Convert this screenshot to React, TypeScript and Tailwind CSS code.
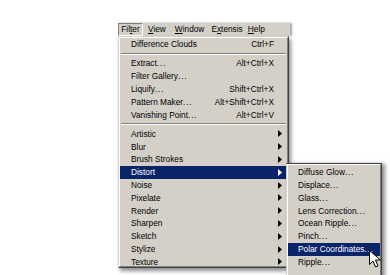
import React from "react";

const font = { fontFamily: '"Liberation Sans", Arial, sans-serif' };

function Arrow({ white }: { white?: boolean }) {
  return (
    <svg width="4" height="7" viewBox="0 0 4 7" className="shrink-0">
      <path d="M0 0 L4 3.5 L0 7 Z" fill={white ? "#ffffff" : "#000000"} />
    </svg>
  );
}

function Label({ text }: { text: string }) {
  if (text.endsWith("...")) {
    return (
      <>
        {text.slice(0, -3)}
        <span className="tracking-[0.8px]">...</span>
      </>
    );
  }
  return <>{text}</>;
}

type Item = { label: string; shortcut?: string; sub?: boolean; active?: boolean };

function Row({ item }: { item: Item }) {
  return (
    <div
      className={`h-[12.8px] flex items-center pl-[11px] pr-[5px] ${
        item.active ? "bg-[#0a246a] text-white" : "text-black"
      }`}
    >
      <span className="flex-1 whitespace-nowrap">
        <Label text={item.label} />
      </span>
      {item.shortcut && <span className="whitespace-nowrap mr-[8px]">{item.shortcut}</span>}
      {item.sub && <Arrow white={item.active} />}
    </div>
  );
}

function Sep() {
  return (
    <div className="h-[6.4px] flex flex-col justify-center px-[1px]">
      <div className="h-[1px] bg-[#808080]" />
      <div className="h-[1px] bg-white" />
    </div>
  );
}

export default function App() {
  const g1: Item[] = [{ label: "Difference Clouds", shortcut: "Ctrl+F" }];
  const g2: Item[] = [
    { label: "Extract...", shortcut: "Alt+Ctrl+X" },
    { label: "Filter Gallery..." },
    { label: "Liquify...", shortcut: "Shift+Ctrl+X" },
    { label: "Pattern Maker...", shortcut: "Alt+Shift+Ctrl+X" },
    { label: "Vanishing Point...", shortcut: "Alt+Ctrl+V" },
  ];
  const g3: Item[] = [
    "Artistic",
    "Blur",
    "Brush Strokes",
    "Distort",
    "Noise",
    "Pixelate",
    "Render",
    "Sharpen",
    "Sketch",
    "Stylize",
    "Texture",
  ].map((l) => ({ label: l, sub: true, active: l === "Distort" }));
  const subItems = [
    "Diffuse Glow...",
    "Displace...",
    "Glass...",
    "Lens Correction...",
    "Ocean Ripple...",
    "Pinch...",
    "Polar Coordinates...",
    "Ripple...",
  ];

  return (
    <div className="relative w-[390px] h-[275px] bg-white overflow-hidden text-[8.3px] leading-none" style={font}>
      {/* Menu bar */}
      <div className="absolute left-[118px] top-[23px] w-[172px] h-[13px] bg-[#d4d0c8] flex items-center shadow-[2px_0_2px_rgba(0,0,0,0.35)]">
        <div className="h-full w-[25px] flex items-center justify-center border border-t-[#808080] border-l-[#808080] border-b-white border-r-white">
          <span>
            Fil<span className="underline">t</span>er
          </span>
        </div>
        <span className="ml-[5px]">
          <span className="underline">V</span>iew
        </span>
        <span className="ml-[9px]">
          <span className="underline">W</span>indow
        </span>
        <span className="ml-[7px]">
          E<span className="underline">x</span>tensis
        </span>
        <span className="ml-[5px]">
          <span className="underline">H</span>elp
        </span>
      </div>

      {/* Main dropdown */}
      <div className="absolute left-[118px] top-[36px] w-[171px] h-[232.4px] bg-[#d4d0c8] border border-t-[#d4d0c8] border-l-[#d4d0c8] border-r-[#404040] border-b-[#404040] shadow-[2px_3px_4px_rgba(0,0,0,0.45)]">
        <div className="h-full border border-t-white border-l-white border-r-[#808080] border-b-[#808080]">
          {g1.map((i) => (
            <Row key={i.label} item={i} />
          ))}
          <Sep />
          {g2.map((i) => (
            <Row key={i.label} item={i} />
          ))}
          <Sep />
          {g3.map((i) => (
            <Row key={i.label} item={i} />
          ))}
        </div>
      </div>

      {/* Submenu */}
      <div className="absolute left-[286px] top-[163px] w-[96px] h-[120px] bg-[#d4d0c8] border border-t-[#404040] border-l-[#d4d0c8] border-r-[#404040] shadow-[3px_1px_4px_rgba(0,0,0,0.45)]">
        <div className="h-full border border-t-white border-l-white border-r-[#808080] border-b-0 pt-[1px]">
          {subItems.map((l) => (
            <div
              key={l}
              className={`h-[12.8px] flex items-center pl-[10px] whitespace-nowrap ${
                l === "Polar Coordinates..." ? "bg-[#0a246a] text-white" : "text-black"
              }`}
            >
              <Label text={l} />
            </div>
          ))}
        </div>
      </div>

      {/* Cursor */}
      <svg className="absolute left-[369px] top-[250px]" width="14" height="20" viewBox="0 0 14 20">
        <path
          d="M0.5 0.5 L0.5 14.5 L4 11 L6.5 17 L9 16 L6.5 10 L11.5 10 Z"
          fill="#ffffff"
          stroke="#000000"
          strokeWidth="1"
          strokeLinejoin="miter"
        />
      </svg>
    </div>
  );
}
